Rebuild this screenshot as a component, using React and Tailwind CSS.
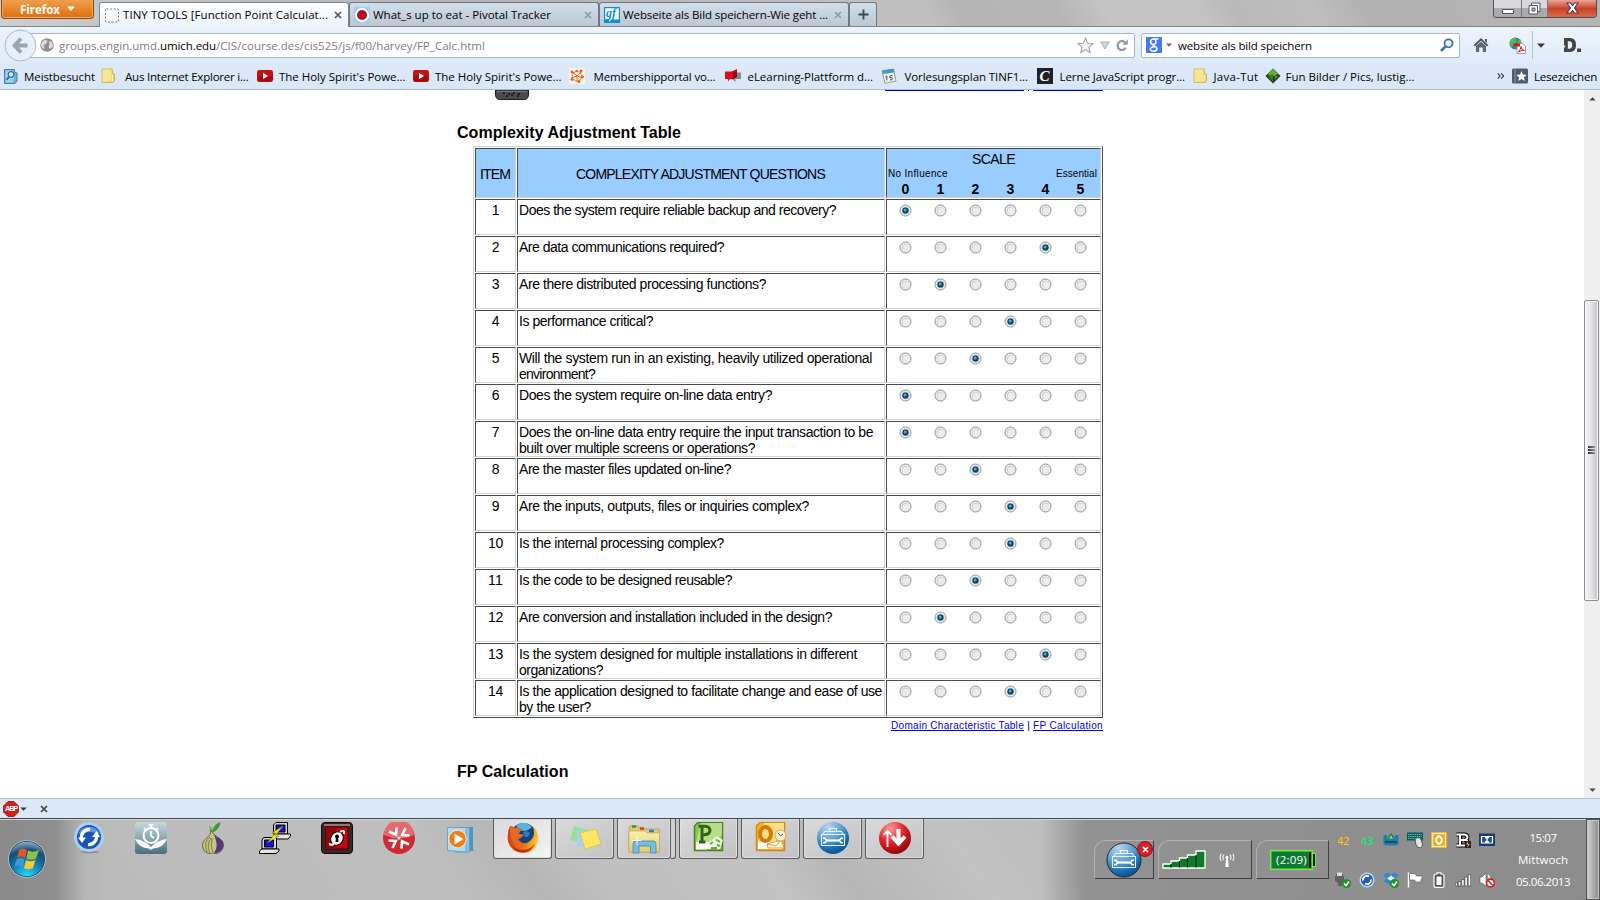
import React, { useLayoutEffect, useRef, useState } from "react";

/* A run of text spread over a given width. */
function Fit({ w, className = "", children }) {
  const ref = useRef(null);
  const [ls, setLs] = useState(0);
  useLayoutEffect(() => {
    const nat = ref.current.getBoundingClientRect().width;
    setLs((w - nat) / String(children).length);
  }, [w, children]);
  return (
    <span className={"block shrink-0 whitespace-pre " + className} style={{ width: w }}>
      <span ref={ref} style={{ letterSpacing: ls + "px" }}>{children}</span>
    </span>
  );
}

const Caret = ({ className = "" }) => (
  <svg className={className} viewBox="0 0 8 5"><path d="M0 0.5H8L4 4.7Z" fill="currentColor" /></svg>
);
const Cross = ({ className = "" }) => (
  <svg className={className} viewBox="0 0 8 8"><path d="M1 1L7 7M7 1L1 7" stroke="currentColor" strokeWidth="1.7" /></svg>
);

/* ---------- bookmark icons ---------- */
const S16 = ({ children, className = "" }) => (
  <svg className={"h-4 w-4 shrink-0 " + className} viewBox="0 0 16 16">{children}</svg>
);
const MostVisited = () => (
  <S16>
    <path d="M1.5 1.5H11.5V4L14 5V13L12 15.5H1.5Z" fill="#6fb1da" stroke="#3f7fae" />
    <path d="M2.5 2.5H10.5V14.5H2.5Z" fill="#9fd0ee" />
    <circle cx="8" cy="6.5" r="2.8" fill="#cfeaf9" stroke="#2e6e9e" strokeWidth="1.2" />
    <path d="M6 8.8L3.5 11.8" stroke="#2e6e9e" strokeWidth="1.8" />
  </S16>
);
const Folder = () => (
  <S16>
    <path d="M2 1H12.500V5.500L14.500 6V13L12.500 14.500H2Z" fill="#e8cc68" stroke="#cdae4c" strokeWidth="0.800" />
    <path d="M2.500 1.500H11.500V13.500L2.500 14.300Z" fill="#f6e595" />
    <path d="M12.500 6.500V13" stroke="#fff3b5" />
  </S16>
);
const YouTube = () => (
  <S16>
    <rect x="0" y="2" width="16" height="12" rx="2.2" fill="#c31212" />
    <rect x="0.5" y="8" width="15" height="5.6" rx="2" fill="#a50c0c" />
    <path d="M6 4.8L11 8L6 11.2Z" fill="#fff" />
  </S16>
);
const Member = () => (
  <S16>
    <rect width="16" height="16" fill="#fdf6ef" rx="1" />
    <circle cx="8" cy="8.2" r="4.800" fill="none" stroke="#ec9a62" strokeWidth="1.2" />
    <path d="M8 8L3 3M8 8L13 3M8 8L2 10M8 8L14 10M8 8L8 14" stroke="#dd5a1e" strokeWidth="0.900" />
    <circle cx="3" cy="4" r="1.500" fill="#e8601e" /><circle cx="12" cy="3" r="1.500" fill="#e8601e" /><circle cx="7.500" cy="3" r="1.200" fill="#e8601e" />
    <circle cx="13.500" cy="9" r="1.400" fill="#e8601e" /><circle cx="3" cy="11.500" r="1.400" fill="#e8601e" /><circle cx="10" cy="13.500" r="1.500" fill="#e8601e" />
  </S16>
);
const ELearn = () => (
  <S16>
    <path d="M0 3.500H8V11H5L3 13.500V11H0Z" fill="#e30a17" />
    <path d="M8 4.500H16V11H10.500V14L8 11.500Z" fill="#7f8a8c" />
    <path d="M7 3.500L12 1V9L7 11.500Z" fill="#c20d18" /><path d="M8 5L12 4V9L8 11Z" fill="#8d0c14" />
  </S16>
);
const Calendar = () => (
  <S16>
    <path d="M1 3L12.500 1L15 13L4 15.3Z" fill="#eef0ee" stroke="#84888a" strokeWidth="0.800" />
    <path d="M1 2.500L12.500 0.800L13.300 4.500L1.700 6Z" fill="#3c9bd0" />
    <path d="M4.500 8.800L5.800 8V12.300M11.500 7.500L8.800 8L9 10Q11.500 9 11.700 10.500Q11.500 12 9 12" stroke="#4a4e50" strokeWidth="1" fill="none" />
  </S16>
);
const CodeC = () => (
  <span className="flex h-4 w-4 shrink-0 items-center justify-center bg-[#1f2329] font-['Liberation_Serif',serif] text-[15px] leading-4 font-bold text-white italic">C</span>
);
const Diamond = () => (
  <S16>
    <path d="M8 0.5L15.5 8L8 15.5L0.5 8Z" fill="#2a3a1c" />
    <path d="M8 1L13 6L7 9L3 6Z" fill="#5db52b" />
    <path d="M3 8L8 6L8 14Z" fill="#3b7d20" /><path d="M10 8L13 8L9.5 12Z" fill="#7c8a70" />
  </S16>
);

const bookmarks = [
  { I: MostVisited, t: "Meistbesucht", w: 71, a: "ml-[3px]", b: "ml-[5px]" },
  { I: Folder, t: "Aus Internet Explorer i...", w: 123.5, a: "ml-[5px]", b: "ml-[9px]" },
  { I: YouTube, t: "The Holy Spirit's Powe...", w: 126.5, a: "ml-[8.5px]", b: "ml-[6px]" },
  { I: YouTube, t: "The Holy Spirit's Powe...", w: 126.5, a: "ml-[7.500px]", b: "ml-[6px]" },
  { I: Member, t: "Membershipportal vo...", w: 122, a: "ml-[7.500px]", b: "ml-[8.500px]" },
  { I: ELearn, t: "eLearning-Plattform d...", w: 125.5, a: "ml-[9px]", b: "ml-[7px]" },
  { I: Calendar, t: "Vorlesungsplan TINF1...", w: 123.5, a: "ml-[7.500px]", b: "ml-[8px]" },
  { I: CodeC, t: "Lerne JavaScript progr...", w: 125.5, a: "ml-[8.500px]", b: "ml-[7px]" },
  { I: Folder, t: "Java-Tut", w: 45, a: "ml-[6.500px]", b: "ml-[6px]" },
  { I: Diamond, t: "Fun Bilder / Pics, lustig...", w: 129, a: "ml-[6px]", b: "ml-[5px]" },
];

/* ---------- browser chrome ---------- */
function TitleBar() {
  return (
    <div className="relative flex h-[27px] items-start border-b border-[#858585] bg-[linear-gradient(60deg,#cfcfcf_0%,#c6c6c6_6%,#b4b4b4_30%,#c0c0c0_57%,#bfbfbf_58%,#b4b4b4_60%,#b6b6b6_66%,#c4c4c4_69%,#c2c2c2_75%,#b9b9b9_77%,#bebebe_82%,#b2b2b2_85%,#b5b5b5_100%)]">
      <div className="ml-px flex h-[19px] w-[93px] items-start rounded-b-[4px] border border-t-0 border-[#8a4a10] bg-linear-to-b from-[#eda04f] via-[#e8872a] to-[#dc6d0c] pl-[18px] shadow-[inset_0_-1px_0_#f3b070,inset_1px_0_0_#f0a660,inset_-1px_0_0_#f0a660]">
        <Fit w={40} className="text-[11.5px] leading-[19px] font-bold text-white">Firefox</Fit>
        <Caret className="mt-[6px] ml-[7px] h-[5px] w-[8px] text-white" />
      </div>
      <div className="mt-[2px] ml-[5px] flex h-[25px] w-[250px] items-center rounded-t-[3px] border border-b-0 border-[#7c8791] bg-linear-to-b from-white to-[#ebf3fc] pl-[5px]">
        <svg className="h-[15px] w-[14px]" viewBox="0 0 14 15"><rect x="0.5" y="1" width="13" height="13" rx="1" fill="none" stroke="#777" strokeDasharray="2 1.6" /></svg>
        <Fit w={205} className="ml-[4px] text-[11.5px]">TINY TOOLS [Function Point Calculat...</Fit>
        <Cross className="ml-[6px] h-[8px] w-[8px] text-[#555]" />
      </div>
      <div className="mt-[2px] flex h-[24px] w-[250px] items-center rounded-t-[3px] border border-b-0 border-[#6f7780] bg-linear-to-b from-[#d3deea] to-[#bac7d4] pl-[4px]">
        <svg className="h-4 w-4" viewBox="0 0 16 16"><rect width="16" height="16" fill="#9fd0f0" /><circle cx="8" cy="8" r="7" fill="#fff" /><circle cx="8" cy="8" r="5" fill="#b5121f" /></svg>
        <Fit w={178} className="ml-[3px] text-[11.5px]">What_s up to eat - Pivotal Tracker</Fit>
        <Cross className="ml-[33px] h-[8px] w-[8px] text-[#909aa4]" />
      </div>
      <div className="mt-[2px] flex h-[24px] w-[250px] items-center rounded-t-[3px] border border-[#6f7780] border-b-0 bg-linear-to-b from-[#d3deea] to-[#bac7d4] pl-[4px]">
        <svg className="h-4 w-4" viewBox="0 0 16 16"><path d="M0 0H16V16H0Z" fill="#0d8fd4" /><path d="M1.2 1.2H14.800V12.500H7L5.500 15L5 12.500H1.2Z" fill="#fff" /><text x="2" y="9.800" fontSize="12" fontStyle="italic" fontWeight="bold" fontFamily="Liberation Serif, serif" fill="#0d8fd4">gf</text></svg>
        <Fit w={205} className="ml-[3px] text-[11.5px]">Webseite als Bild speichern-Wie geht ...</Fit>
        <Cross className="ml-[6px] h-[8px] w-[8px] text-[#909aa4]" />
      </div>
      <div className="mt-[2px] flex h-[24px] w-[28px] items-center justify-center rounded-t-[3px] border border-b-0 border-[#6f7780] bg-linear-to-b from-[#d3deea] to-[#bac7d4]">
        <svg className="h-[11px] w-[11px]" viewBox="0 0 11 11"><path d="M5.5 0.5V10.5M0.5 5.5H10.5" stroke="#3d4650" strokeWidth="1.8" /></svg>
      </div>
      <div className="mr-[3px] ml-auto flex h-[18px] overflow-hidden rounded-b-[4px] border border-t-0 border-[#4e4e55]">
        <div className="flex w-[28px] items-center justify-center border-r border-[#77777c] bg-linear-to-b from-[#d8d8dc] from-50% to-[#a9a9ae] to-50%">
          <div className="mt-[5px] h-[5px] w-[12px] rounded-[1px] border border-[#55555f] bg-white" />
        </div>
        <div className="flex w-[26px] items-center justify-center border-r border-[#77777c] bg-linear-to-b from-[#d8d8dc] from-50% to-[#a9a9ae] to-50%">
          <svg className="mb-px h-[13px] w-[13px]" viewBox="0 0 13 13"><path d="M3.5 1H12V9.5H9.5V12H1V3.5H3.5Z" fill="#fff" stroke="#55555f" /><path d="M3.5 3.5H9.5V9.5" fill="none" stroke="#55555f" /><path d="M4 6H7V9H4Z" fill="#bbb" stroke="#55555f" /></svg>
        </div>
        <div className="flex w-[48px] items-center justify-center bg-linear-to-b from-[#e8a497] from-0% via-[#c5432b] via-50% to-[#d9694a]">
          <svg className="mb-px h-[12px] w-[13px]" viewBox="0 0 13 12"><path d="M1 1H4.500L6.500 3.500L8.500 1H12L8.500 6L12 11H8.500L6.500 8.500L4.500 11H1L4.500 6Z" fill="#fff" stroke="#4c3a50" strokeWidth="1.100" /></svg>
        </div>
      </div>
    </div>
  );
}

function NavBar() {
  return (
    <div className="flex h-[36px] items-center bg-linear-to-b from-[#ecf4fd] to-[#dfebf9]">
      <svg className="z-10 ml-[3.500px] h-[33px] w-[33px] shrink-0" viewBox="0 0 33 33">
        <circle cx="16.500" cy="16.500" r="15.500" fill="#e6effa" stroke="#a9b9cc" />
        <path d="M23.500 16.500H11M17 9.500L10.500 16.500L17 23.500" fill="none" stroke="#98a4b0" strokeWidth="3.800" />
      </svg>
      <div className="-ml-[6.500px] flex h-[25px] w-[1105px] items-center rounded-r-[2px] border border-[#a4b6cd] bg-white pl-[9px]">
        <svg className="h-[14px] w-[14px]" viewBox="0 0 14 14"><circle cx="7" cy="7" r="6.800" fill="#8e8e8e" /><path d="M2 4L5 1.500L7.500 3L6 6L3.500 7L4.500 10L3 11L0.800 7ZM9 3L12 4L13 8L10.500 11L8.500 9L9.500 6Z" fill="#dcdcdc" /></svg>
        <Fit w={101} className="mt-px ml-[5px] text-[11.5px] text-[#7d7d7d]">groups.engin.umd.</Fit>
        <Fit w={56} className="mt-px text-[11.5px]">umich.edu</Fit>
        <Fit w={269} className="mt-px text-[11.5px] text-[#7d7d7d]">/CIS/course.des/cis525/js/f00/harvey/FP_Calc.html</Fit>
        <svg className="ml-auto h-[17px] w-[17px]" viewBox="0 0 17 17"><path d="M8.500 1.200L10.600 6.200L16 6.600L11.900 10.100L13.200 15.500L8.500 12.600L3.800 15.500L5.100 10.100L1 6.600L6.400 6.200Z" fill="#f4f4f4" stroke="#a5a5a5" strokeWidth="1.100" /></svg>
        <svg className="ml-[6px] h-[9px] w-[10px]" viewBox="0 0 10 9"><path d="M0.800 1H9.200L5 8Z" fill="#cfd6de" stroke="#aab3bd" /></svg>
        <svg className="mr-[6px] ml-[6px] h-[13px] w-[12px]" viewBox="0 0 12 13"><path d="M9.800 8.800A4.400 4.400 0 1 1 9 3.400" fill="none" stroke="#8d99a6" strokeWidth="2.200" /><path d="M6.300 5.800H11.800V0.300Z" fill="#8d99a6" /></svg>
      </div>
      <div className="ml-[6px] flex h-[25px] w-[319px] items-center rounded-[2px] border border-[#a4b6cd] bg-white pl-[4px]">
        <svg className="h-4 w-4" viewBox="0 0 16 16"><rect width="16" height="16" rx="0.500" fill="#4479f5" /><circle cx="7.300" cy="4.800" r="2.700" fill="none" stroke="#fff" strokeWidth="1.500" /><path d="M8 2H12.500M9 7.500Q6 8.200 8 9.300Q11 10 11 12Q10.500 14.200 7.500 14.200T4.200 12Q4.500 10 8.500 9.800" fill="none" stroke="#fff" strokeWidth="1.400" /></svg>
        <Caret className="ml-[4px] h-[4px] w-[6px] text-[#666]" />
        <Fit w={134} className="mt-px ml-[6px] text-[11.5px]">website als bild speichern</Fit>
        <svg className="mr-[5px] ml-auto h-[14px] w-[14px]" viewBox="0 0 14 14"><circle cx="8.500" cy="5.300" r="4" fill="#eef6fd" stroke="#3d74ad" strokeWidth="1.800" /><path d="M5.600 8.300L1 13" stroke="#3d74ad" strokeWidth="2.600" /></svg>
      </div>
      <svg className="ml-[13px] h-[16px] w-[16px] shrink-0" viewBox="0 0 16 16"><path d="M0.500 8.300L8 1L15.500 8.300L14 9.500L8 3.800L2 9.500Z" fill="#4e5a64" /><path d="M12 2H14V6L12 4Z" fill="#4e5a64" /><path d="M3 9L8 4.800L13 9V15H9.800V10.500H6.200V15H3Z" fill="#5c6871" /></svg>
      <svg className="ml-[20px] h-[17px] w-[17px] shrink-0" viewBox="0 0 17 17"><circle cx="6.500" cy="6.500" r="6" fill="#3277c7" /><path d="M1 4Q4 0 7 1L8 5L4 7L3 11Q0 8 1 4ZM9 2L12 4V7H9Z" fill="#56b83c" /><path d="M8 6.500H13.500L16.500 9V16.500H8Z" fill="#fff" stroke="#8c8c8c" strokeWidth="0.800" /><path d="M5 6.500H11V9.500H5Z" fill="#e51010" /><path d="M9.500 15Q12 12 12 9.500Q12 12.500 15.300 13.500Q12 13 9.500 15Z" fill="none" stroke="#d21f1f" /></svg>
      <div className="ml-[6px] h-[28px] w-px bg-[#b4c3d4]" />
      <Caret className="ml-[4px] h-[5px] w-[8px] text-[#2e3a42]" />
      <svg className="ml-[19px] h-[14px] w-[17px] shrink-0" viewBox="0 0 17 14"><path d="M0 0H6Q12 0 12 7T6 14H0V10L1.500 8.500L0 7ZM3.800 3.300V10.700H5.500Q8.200 10.700 8.200 7T5.500 3.300Z" fill="#444" fillRule="evenodd" /><path d="M13 10.500H17V14H13Z" fill="#444" /></svg>
    </div>
  );
}

function BookmarkBar() {
  return (
    <div className="flex h-[27px] items-center border-b border-[#a9bbd2] bg-linear-to-b from-[#dde9f8] to-[#d9e7f7] text-[11.5px]">
      {bookmarks.map(({ I, t, w, a, b }, i) => (
        <div key={i} className={"flex items-center " + a}>
          <I />
          <Fit w={w} className={"mt-[2px] " + b}>{t}</Fit>
        </div>
      ))}
      <svg className="ml-auto h-[6px] w-[8px] shrink-0" viewBox="0 0 9 7"><path d="M0.700 0.500L3.500 3.500L0.700 6.500M4.700 0.500L7.500 3.500L4.700 6.500" fill="none" stroke="#222" strokeWidth="1.200" /></svg>
      <S16 className="ml-[7px]"><rect y="0.500" width="16" height="15" rx="1.500" fill="#4e5d69" /><path d="M3 1V15" stroke="#8d9aa5" /><path d="M9.500 3L11 6.600L14.600 6.900L11.900 9.300L12.800 13L9.500 11L6.200 13L7.100 9.300L4.400 6.900L8 6.600Z" fill="#fff" /></S16>
      <Fit w={63} className="mt-[2px] mr-[3px] ml-[6px]">Lesezeichen</Fit>
    </div>
  );
}

/* ---------- page ---------- */
const questions = [
  [0, ["Does the system require reliable backup and recovery?", 317]],
  [4, ["Are data communications required?", 205]],
  [1, ["Are there distributed processing functions?", 247]],
  [3, ["Is performance critical?", 134]],
  [2, ["Will the system run in an existing, heavily utilized operational", 353], ["environment?", 76]],
  [0, ["Does the system require on-line data entry?", 253]],
  [0, ["Does the on-line data entry require the input transaction to be", 354], ["built over multiple screens or operations?", 236]],
  [2, ["Are the master files updated on-line?", 212]],
  [3, ["Are the inputs, outputs, files or inquiries complex?", 290]],
  [3, ["Is the internal processing complex?", 205]],
  [2, ["Is the code to be designed reusable?", 213]],
  [1, ["Are conversion and installation included in the design?", 313]],
  [4, ["Is the system designed for multiple installations in different", 338], ["organizations?", 84]],
  [3, ["Is the application designed to facilitate change and ease of use", 363], ["by the user?", 72]],
];

const cell = "border border-t-[#4a4a4a] border-l-[#4a4a4a] border-r-[#d3d3d3] border-b-[#d3d3d3] ";

const Radio = ({ on }) => (
  <svg className="h-[13px] w-[13px]" viewBox="0 0 13 13">
    <circle cx="6.500" cy="6.500" r="5.500" fill="#f8f8f8" stroke="#8b8c8e" />
    <circle cx="6.500" cy="6.500" r="4" fill={on ? "#b9cdd9" : "#d3d4d7"} />
    <circle cx="7" cy="7" r="3.200" fill={on ? "#b8d0de" : "#ebeced"} />
    {on && <circle cx="6.500" cy="6.500" r="3.100" fill="#12405f" />}
    {on && <circle cx="6.200" cy="6" r="1.500" fill="#3fb0e0" />}
  </svg>
);

function Table() {
  return (
    <div className="ml-[16px] grid w-[630px] grid-cols-[41px_368px_215px] gap-px border border-t-[#d3d3d3] border-r-[#4a4a4a] border-b-[#4a4a4a] border-l-[#d3d3d3] p-px text-[14px] leading-4">
      <div className={cell + "flex h-[50px] items-center bg-[#99ccff] pl-[4px]"}><Fit w={30} className="mt-px">ITEM</Fit></div>
      <div className={cell + "flex items-center bg-[#99ccff] pl-[58px]"}><Fit w={249} className="mt-px">COMPLEXITY ADJUSTMENT QUESTIONS</Fit></div>
      <div className={cell + "flex flex-col bg-[#99ccff] pt-[2px]"}>
        <Fit w={43} className="ml-[85px]">SCALE</Fit>
        <div className="flex h-[14px] items-center justify-between pr-[3px] pl-px text-[10px]">
          <Fit w={60}>No Influence</Fit>
          <Fit w={41}>Essential</Fit>
        </div>
        <div className="ml-px flex font-bold">
          {[0, 1, 2, 3, 4, 5].map((n) => <span key={n} className="w-[35px] text-center">{n}</span>)}
        </div>
      </div>
      {questions.map(([sel, ...lines], i) => (
        <React.Fragment key={i}>
          <div className={cell + "flex h-[36px] justify-center pt-[2px]"}><Fit w={i < 9 ? 7.5 : 15}>{String(i + 1)}</Fit></div>
          <div className={cell + "h-[36px] pt-[2px] pl-px"}>
            {lines.map(([t, w]) => <Fit key={t} w={w}>{t}</Fit>)}
          </div>
          <div className={cell + "flex pt-[4px] pl-px"}>
            {[0, 1, 2, 3, 4, 5].map((n) => <span key={n} className="flex w-[35px] justify-center"><Radio on={n === sel} /></span>)}
          </div>
        </React.Fragment>
      ))}
    </div>
  );
}

function Page() {
  return (
    <div className="flex h-[708px] bg-white font-['Liberation_Sans',Arial,sans-serif]">
      <div className="flex w-[1584px] flex-col pl-[457px]">
        <div className="flex h-[11px] items-start">
          <svg className="ml-[38px] h-[10px] w-[34px]" viewBox="0 0 34 10"><path d="M0.500 0H33.500V5Q33 9.500 29 9.500H5Q1 9.500 0.500 5Z" fill="#4b4b4b" stroke="#1c1c1c" /><path d="M2 1.500H32" stroke="#777" /><path d="M8 3H10M13 4H15M18 3H20M23 4H25M11 6H13M16 5H18M22 6H24" stroke="#111" strokeWidth="1.400" /></svg>
          <div className="ml-[356px] h-px w-[139px] bg-[#0000ee]" />
          <div className="ml-[4px] h-px w-px bg-black" />
          <div className="ml-[4px] h-px w-[70px] bg-[#0000ee]" />
        </div>
        <Fit w={224} className="mt-[23px] h-[22px] text-[16px] leading-[18px] font-bold">Complexity Adjustment Table</Fit>
        <Table />
        <div className="mt-[2px] flex h-[12px] w-[646px] justify-end text-[10px] leading-[12px] text-[#0000ee]">
          <Fit w={133} className="underline">Domain Characteristic Table</Fit>
          <span className="w-[9px] text-center text-black">|</span>
          <Fit w={70} className="underline">FP Calculation</Fit>
        </div>
        <Fit w={111.5} className="mt-[31px] text-[16px] leading-[18px] font-bold">FP Calculation</Fit>
      </div>
      <div className="flex w-4 flex-col items-center bg-[#efefef] text-[#444]">
        <Caret className="mt-[7px] h-[4px] w-[7px] rotate-180" />
        <div className="mt-[199px] mr-px flex h-[301px] w-[15px] flex-col items-center justify-center gap-px rounded-[2px] border border-[#8f8f92] bg-linear-to-r from-[#f6f6f8] via-[#e3e3e7] to-[#c2c2c9] pb-[2px] shadow-[inset_0_0_0_1px_#f8f8fa]">
          <div className="h-[2px] w-[7px] bg-linear-to-r from-[#333] to-[#999]" /><div className="h-[2px] w-[7px] bg-linear-to-r from-[#333] to-[#999]" /><div className="h-[2px] w-[7px] bg-linear-to-r from-[#333] to-[#999]" />
        </div>
        <Caret className="mt-auto mb-[6px] h-[4px] w-[7px]" />
      </div>
    </div>
  );
}

/* ---------- task bar ---------- */
const S32 = ({ children, className = "" }) => (
  <svg className={"h-8 w-8 shrink-0 " + className} viewBox="0 0 32 32">{children}</svg>
);

const Toolbox = () => (
  <>
    <path d="M4.500 12.500H27.500V23.500H4.500ZM6 12.500L7.500 9.500H24.500L26 12.500M12.500 9.500V6.500H19.500V9.500" fill="none" stroke="#e8f5ff" strokeWidth="1.100" />
    <path d="M9 18.500H23" stroke="#fff" strokeWidth="2.200" />
    <path d="M6 16.300H8L9.500 18.500L8 20.700H6M26 16.300H24L22.500 18.500L24 20.700H26" fill="none" stroke="#fff" strokeWidth="1.600" />
  </>
);

function Defs() {
  return (
    <svg className="absolute h-0 w-0">
      <defs>
        <radialGradient id="blue" cx="0.35" cy="0.15" r="0.95"><stop offset="0" stopColor="#b5d6f2" /><stop offset="0.450" stopColor="#5b9fd6" /><stop offset="0.75" stopColor="#1568aa" /><stop offset="1" stopColor="#064a80" /></radialGradient>
        <radialGradient id="red" cx="0.35" cy="0.2" r="0.9"><stop offset="0" stopColor="#ff9a9a" /><stop offset="0.5" stopColor="#dd2227" /><stop offset="1" stopColor="#7d0004" /></radialGradient>
        <radialGradient id="orb" cx="0.5" cy="1" r="1"><stop offset="0" stopColor="#22e4ff" /><stop offset="0.4" stopColor="#1286bd" /><stop offset="0.75" stopColor="#124c75" /><stop offset="1" stopColor="#9fb6c8" /></radialGradient>
        <linearGradient id="teal" x1="0" y1="0" x2="0" y2="1"><stop offset="0" stopColor="#c9dadd" /><stop offset="0.550" stopColor="#86a4ac" /><stop offset="1" stopColor="#466e80" /></linearGradient>
        <linearGradient id="fox" x1="0" y1="0.300" x2="1" y2="0.500"><stop offset="0" stopColor="#d8380f" /><stop offset="0.6" stopColor="#e8741b" /><stop offset="1" stopColor="#fbcf35" /></linearGradient>
        <linearGradient id="folder" x1="0" y1="0" x2="0" y2="1"><stop offset="0" stopColor="#fbf0b4" /><stop offset="1" stopColor="#e5cb6a" /></linearGradient>
      </defs>
    </svg>
  );
}

const Sync = () => (
  <S32>
    <ellipse cx="17" cy="30" rx="9" ry="1.500" fill="#777" opacity="0.6" />
    <circle cx="16" cy="15" r="15" fill="#a9d0f3" /><circle cx="16" cy="15" r="12" fill="#1a54b4" /><path d="M5 12A12 12 0 0 1 27 12Q16 8 5 12" fill="#5c96dd" />
    <path d="M8.500 17A8 8 0 0 1 17 7.500" fill="none" stroke="#fff" strokeWidth="3.200" /><path d="M5 15.500H13L9 21Z" fill="#fff" />
    <path d="M23.500 13A8 8 0 0 1 15 22.500" fill="none" stroke="#fff" strokeWidth="3.200" /><path d="M27 15H19L23.500 9Z" fill="#fff" />
  </S32>
);
const ClockApp = () => (
  <S32>
    <rect width="32" height="32" rx="3" fill="url(#teal)" />
    <circle cx="16" cy="13.500" r="7.500" fill="none" stroke="#fff" strokeWidth="2" /><path d="M13.500 3H18.500M16 3V6M9 6L11 8M23 6L21 8M16 9V14L19 16" fill="none" stroke="#fff" strokeWidth="1.600" />
    <path d="M0 17Q9 18 14.500 23.500L16 25L17.500 23.500Q23 18 32 17Q28 26 18 26.500L16 28L14 26.500Q4 26 0 17Z" fill="#fff" />
  </S32>
);
const Onion = () => (
  <S32>
    <path d="M15 10Q16 3 23 0Q24 5 17 10Z" fill="#3f9a35" /><path d="M13 10L12 3L16 8Z" fill="#6cb84a" />
    <path d="M14 8Q16 13 22 16Q27 19 26.500 24Q25 32 16 32Q7 32 5.500 25Q5 19 10 16Q14 13 14 8Z" fill="#c4c583" stroke="#56542d" strokeWidth="0.800" />
    <path d="M16 11Q17 14 22 16Q27 19 26.500 24Q25 31 16.500 31.500Q23 24 16 11Z" fill="#54387b" />
    <path d="M13 15Q6 20 10 30M14 16Q9 23 13 31M15 16Q13 24 16 31" fill="none" stroke="#777743" strokeWidth="0.900" />
  </S32>
);
const Putty = () => (
  <S32>
    <g stroke="#000" strokeWidth="1"><path d="M17 0.500H28.500V12H14.500V3Z" fill="#d7d7d7" /><path d="M17 3H26V10H17Z" fill="#1210e0" /><path d="M16 12H31.500V14L29 17H14Z" fill="#e6e6e6" />
    <path d="M4.500 15.500H17.500V27H3V18Z" fill="#d7d7d7" /><path d="M5.500 18H14.500V25H5.500Z" fill="#1210e0" /><path d="M3 27H20V29L17 31.500H0.500V29Z" fill="#e6e6e6" /></g>
    <path d="M24 4L13 11H17L8 21L20 14H16Z" fill="#fff000" stroke="#847a00" strokeWidth="0.600" />
  </S32>
);
const RedBox = () => (
  <S32>
    <rect x="0.500" y="0.500" width="31" height="31" rx="3.500" fill="#3a2626" stroke="#140808" /><path d="M3 3H29" stroke="#a39a9a" strokeWidth="1.500" />
    <rect x="5" y="5" width="22" height="22" fill="#c20810" stroke="#400" /><path d="M5 5H15V27H5Z" fill="#960409" />
    <ellipse cx="16" cy="16.500" rx="6" ry="7" fill="#fff" stroke="#000" transform="rotate(35 16 16.500)" /><path d="M9 21Q8 24 13 22M19 10Q24 7 23 12" stroke="#fff" strokeWidth="2" fill="none" />
    <circle cx="16" cy="14.500" r="2" fill="#000" /><path d="M15 15H17L17.500 20H14.500Z" fill="#000" />
  </S32>
);
const RedCircle = () => (
  <S32>
    <circle cx="16" cy="16" r="16" fill="#cf2a33" /><path d="M1 13A15 15 0 0 1 31 13Q16 20 1 13" fill="#e46a6e" />
    <g fill="none" stroke="#fff" strokeWidth="2.600">
      <path d="M6 9.500L13 12.800L13.500 5.500" />
      <path d="M6 9.500L13 12.800L13.500 5.500" transform="rotate(90 16 16)" />
      <path d="M6 9.500L13 12.800L13.500 5.500" transform="rotate(180 16 16)" />
      <path d="M6 9.500L13 12.800L13.500 5.500" transform="rotate(270 16 16)" />
    </g>
    <circle cx="16" cy="16" r="1.500" fill="#fff" />
  </S32>
);
const Player = () => (
  <S32>
    <path d="M14 5H28V28L30 29H14Z" fill="#4b97c0" /><path d="M10 5.500H24.500V30H10Z" fill="#8fc5e2" stroke="#4c97c3" strokeWidth="0.700" /><path d="M2.500 5.500H21V30L2.500 28.500Z" fill="#b2dbf0" stroke="#4c97c3" strokeWidth="0.700" />
    <circle cx="12.500" cy="17" r="8.800" fill="#f07c1c" stroke="#fff0dd" /><path d="M9.500 11.500L18.500 17L9.500 22.500Z" fill="#fff" />
  </S32>
);
const FirefoxIcon = () => (
  <S32>
    <circle cx="16.500" cy="14" r="13" fill="#17417c" /><path d="M9 4Q17 -3 25 5Q21 9 17 9T9 4Z" fill="#57b2dc" /><path d="M16 10Q20 8 23 11Q22 16 18 15Z" fill="#2f7dbd" />
    <path d="M3 4Q6 4 8 6Q12 5 15 8Q12 9 12 12L17 13Q14 16 11 17Q14 22 20 21Q26 18 27 12Q27 6 25 4Q32 9 31 18Q29 31 16 31Q3 30 0.800 18Q0 10 3 4Z" fill="url(#fox)" />
    <path d="M3 4Q6 4 8 6Q12 5 15 8Q12 9 12 12L17 13Q14 16 11 17Q13 22 18 21Q15 26 9 23Q2 18 3 4Z" fill="#e06a2a" />
    <path d="M3 20Q7 28 16 28Q24 28 28 21Q25 30 16 30.500Q6 30 3 20Z" fill="#b8300c" />
  </S32>
);
const Notes = () => (
  <S32>
    <path d="M5 4L19 8L14 21L1 18Z" fill="#98e09a" /><path d="M8 9H21V25H8Z" fill="#a9cff8" /><path d="M11 11L27 7L32 22L16 27Z" fill="#ffe566" stroke="#dcbf45" strokeWidth="0.800" />
  </S32>
);
const Explorer = () => (
  <S32>
    <path d="M2 4H10L12 7H31V30H1V6Z" fill="#e4ca71" stroke="#ae934a" strokeWidth="0.700" /><path d="M4 4.500H8" stroke="#18a93a" strokeWidth="2.500" /><path d="M12 6.500H16" stroke="#d93c26" strokeWidth="2.500" /><path d="M21 9H26" stroke="#1c86d8" strokeWidth="2.500" />
    <path d="M1 9H17L19 11H31.500V30H1Z" fill="url(#folder)" stroke="#c0a653" strokeWidth="0.700" />
    <path d="M5 31V22Q5 19 8 19H25Q28 19 28 22V31H22.500V24H11V31Z" fill="#78bce0" stroke="#3d86b5" strokeWidth="0.800" /><path d="M9 14V23M4.500 18.500H13.500" stroke="#fff" strokeWidth="0.900" />
  </S32>
);
const Project = () => (
  <S32>
    <path d="M5 0.500H29.500V28.500H1.500V4Z" fill="#8dc452" stroke="#46811e" strokeWidth="1.500" /><path d="M8 1H29V14Q18 18 14 28H3V20Z" fill="#b8dd86" /><path d="M3 20H27V27H3Z" fill="#fff" />
    <path d="M9 4V20M5.500 4.200H12Q17 4.500 17 8.500Q16.500 13 10 12.800M6 20H12.500" fill="none" stroke="#30661a" strokeWidth="3" />
    <path d="M16 20L24 14L30 18L27 27H16Z" fill="#edf8e3" /><path d="M17 22L20 20M23 17.500L27 20M18 26H24M24 23L27 24" stroke="#69a53c" strokeWidth="2" fill="none" />
  </S32>
);
const Outlook = () => (
  <S32>
    <path d="M5 0.500H29.500V28.500H1.500V4Z" fill="#f6b42c" stroke="#d68910" strokeWidth="1.500" /><path d="M9 1H29V10Q20 20 12 27H3V19Z" fill="#ffe08a" /><path d="M3 20H27V27H3Z" fill="#fff" />
    <ellipse cx="10.500" cy="12" rx="5.500" ry="7" fill="none" stroke="#d77c0a" strokeWidth="4" />
    <path d="M12 22L26 18L29 26H13ZM12 22L21 24L26 18" fill="#fff7e6" stroke="#dba044" />
    <circle cx="25.500" cy="13.500" r="5.500" fill="#fff6e0" stroke="#dba044" /><path d="M23 11L25.500 14L28 12" stroke="#aa4020" fill="none" />
  </S32>
);
const Tools = () => <S32><circle cx="16" cy="16" r="16" fill="url(#blue)" /><Toolbox /></S32>;
const Arrows = () => (
  <S32>
    <circle cx="16" cy="16" r="16" fill="url(#red)" /><path d="M8.500 25V10M4.500 13L8.500 9L12.500 13" fill="none" stroke="#fff" strokeWidth="1.800" /><path d="M19.500 7V21M13 14.500L19.500 21.500L26 14.500" fill="none" stroke="#fff" strokeWidth="4" />
  </S32>
);

const launchers = [Sync, ClockApp, Onion, Putty, RedBox, RedCircle, Player];
const windows = [FirefoxIcon, Notes, Explorer, Project, Outlook, Tools, Arrows];

const T = ({ children }) => <svg className="h-4 w-4" viewBox="0 0 16 16">{children}</svg>;
const Check = () => <><circle cx="11.500" cy="11.500" r="4.500" fill="#239321" /><path d="M9 11.500L11 13.500L14 9.500" fill="none" stroke="#fff" strokeWidth="1.500" /></>;

function TrayIcons() {
  return (
    <div className="grid h-[56px] w-[168px] grid-cols-7 content-between justify-items-center">
      <Fit w={12} className="pt-px font-['DejaVu_Sans',sans-serif] text-[10.5px] leading-4 text-[#ffc800]">42</Fit>
      <Fit w={12} className="pt-px font-['DejaVu_Sans',sans-serif] text-[10.5px] leading-4 text-[#00f07c]">43</Fit>
      <T><path d="M0.500 3H4V7H12V3H15.500V12L13 13.500H3L0.500 12Z" fill="#1c7db5" /><path d="M2 9H14V11H2Z" fill="#1d4a66" /><path d="M8 1L12.500 6.500H3.500Z" fill="#2c7d3c" /><path d="M8 3L10 6.500H6Z" fill="#6ee07a" /></T>
      <T><path d="M0 0.500H16V8.500H0Z" fill="#0b5a5c" /><path d="M1 2.500H15M1 4.500H15M1 6.500H10" stroke="#4ec1bd" strokeWidth="1.200" strokeDasharray="1.500 0.700" /><path d="M8 7Q13 3 15 10T11 15.500Q8 13 8 7Z" fill="#e4e4e4" stroke="#555" /></T>
      <T><rect width="16" height="16" fill="#f1a81c" /><rect x="1.500" y="1.500" width="13" height="13" fill="none" stroke="#fff3c9" strokeWidth="1.300" /><ellipse cx="8" cy="8" rx="2.800" ry="3.800" fill="none" stroke="#fff" strokeWidth="2" /></T>
      <T><g fill="none"><path d="M1.500 2.500H9.500Q12.500 3 12.500 5.200T9 8Q13 8.500 13 11T9 13.500H1.500M5.500 2.500V13.500" stroke="#000" strokeWidth="4" /><path d="M1.500 2.500H9.500Q12.500 3 12.500 5.200T9 8H5M9 8Q13 8.500 13 11T9 13.500H1.500M5 2.500V13.500" stroke="#fff" strokeWidth="1.900" /></g><rect x="10" y="9" width="6" height="7" fill="#222" /><path d="M13.500 9L11 12.500H13L12 16L15 12H13Z" fill="#ffb21c" /></T>
      <T><path d="M0 1.500H16V14H0Z" fill="#173e75" /><path d="M2.500 4.500H13.500V11H2.500Z" fill="#234f8c" stroke="#fff" strokeWidth="1.200" /><path d="M6 5.500H10M6 10H10M8 5.500V10" stroke="#fff" strokeWidth="1.400" /></T>

      <T><path d="M1 2H8V4H9V9L7 11V14H3V11L0 9V4H1Z" fill="#606060" /><path d="M2 0.500H7V4H2Z" fill="#ddd" /><Check /></T>
      <T><circle cx="8" cy="8" r="7.500" fill="#b8d8f5" /><circle cx="8" cy="8" r="6" fill="#225db7" /><path d="M4 8.500A4 4 0 0 1 10 4.500M12 7.500A4 4 0 0 1 6 11.500" stroke="#fff" strokeWidth="1.800" fill="none" /></T>
      <T><path d="M4.500 0.500L8 3L11.500 0.500L16 3.500L12.500 6.500L15 9L8 14L1 9L3.500 6.500L0 3.500Z" fill="#2e87cf" /><path d="M8 3.500L12 6.500L8 9L4 6.500Z" fill="#e2f2ff" /><Check /></T>
      <T><path d="M1.500 0.500V15.500" stroke="#fff" strokeWidth="1.500" /><path d="M2.500 1.500H7.500L9.500 4H15.500L13.500 10H9L7.500 8H2.500Z" fill="#fff" stroke="#555" strokeWidth="0.600" /></T>
      <T><path d="M6 2V0.800H10V2Q13 2 13 4V14Q13 15.300 11.500 15.300H4.500Q3 15.300 3 14V4Q3 2 6 2Z" fill="#555" stroke="#fff" strokeWidth="1.200" /><path d="M5.500 4.500H10.500V13H5.500Z" fill="#fff" /></T>
      <T><path d="M0.300 11H2.500V14H0.300ZM3.300 9.500H5.800V14H3.300ZM6.600 7.500H9.100V14H6.600ZM9.900 5H12.400V14H9.900ZM13.200 2.500H15.700V14H13.200Z" fill="#fff" stroke="#444" strokeWidth="0.700" /></T>
      <T><path d="M1 5H3L7 1V14L3 11H1Z" fill="#fff" stroke="#555" strokeWidth="0.600" /><path d="M9 3Q11.500 6 10 9" stroke="#fff" fill="none" strokeWidth="1.300" /><circle cx="11.500" cy="11" r="3.900" fill="#fff" stroke="#dc1c1c" strokeWidth="1.600" /><path d="M9 8.500L14 13.500" stroke="#dc1c1c" strokeWidth="1.500" /></T>
    </div>
  );
}

const panel = "flex h-[39px] shrink-0 items-center rounded-tl-[12px] border border-t-[#b2b2b2] border-l-[#b2b2b2] border-r-[#3f3f3f] border-b-[#3f3f3f] ";

function TaskBar() {
  return (
    <div className="flex h-[82px] items-start border-t border-[#474747] bg-[linear-gradient(90deg,#8b8b8b_0px,#8e8e8e_55px,#b6b6b6_85px,transparent_110px,transparent_1040px,#929292_1085px,#8c8c8c_1600px),linear-gradient(55deg,#bababa_0%,#bebebe_28%,#b6b6b6_33%,#bfbfbf_37%,#c2c2c2_48%,#b6b6b6_52%,#c2c2c2_60%,#bbb_70%)] shadow-[inset_0_1px_0_#d6d6d6]">
      <svg className="mt-[21px] ml-[8px] h-[38px] w-[38px] shrink-0" viewBox="0 0 38 38">
        <circle cx="19" cy="19" r="17.800" fill="url(#orb)" stroke="#1d4057" /><circle cx="19" cy="19" r="18.500" fill="none" stroke="#b8d8e8" strokeWidth="0.700" />
        <path d="M11 10Q15 7 19 10L17 18Q13 15 9 18Z" fill="#e2542a" /><path d="M20 10.500Q25 13 31 10L28 18.500Q23 21 18.500 18.500Z" fill="#8dc344" />
        <path d="M8.500 19.500Q13 16.500 16.500 19.500L14.500 27Q10 24 6.500 27Z" fill="#3d97dc" /><path d="M18 20Q23 22.500 27.500 20L25 28Q20 30.500 16 28Z" fill="#fcc82c" />
      </svg>
      <div className="mt-[3px] ml-[27px] flex gap-[30px]">
        {launchers.map((I, i) => <I key={i} />)}
      </div>
      <div className="ml-[16px] flex gap-[3px]">
        {windows.map((I, i) => (
          <div key={i} className="flex h-[40px] w-[59px]">
            <div className={"flex h-[40px] flex-1 items-start justify-center rounded-b-[3px] border border-t-0 border-[#5b5b5b] pt-[3px] shadow-[inset_0_0_0_1px_#dedede] " + (i === 0 ? "bg-linear-to-br from-[#d9d9db] to-[#f4f4f5]" : "bg-linear-to-br from-[#dadadc] to-[#c2c2c4]")}>
              <I />
            </div>
            {i === 2 && <div className="h-[40px] w-[5px] rounded-br-[3px] border border-t-0 border-l-0 border-[#5b5b5b] bg-[#d0d0d2]" />}
          </div>
        ))}
      </div>
      <div className="mt-[21px] ml-auto flex gap-[4px]">
        <div className={panel + "relative w-[60px] justify-center"}>
          <svg className="h-[36px] w-[36px]" viewBox="-2 -2 36 36"><circle cx="16" cy="16" r="17" fill="url(#blue)" stroke="#2a2a2a" /><Toolbox /></svg>
          <div className="absolute top-0 right-0 flex h-4 w-4 items-center justify-center rounded-full border border-[#941212] bg-[#d42027] text-white"><Cross className="h-[7px] w-[7px]" /></div>
        </div>
        <div className={panel + "w-[94px] pl-[3px]"}>
          <svg className="h-[20px] w-[44px]" viewBox="0 0 44 20"><path d="M1 18V14H9V11H17.500V8H25.500V5H34V1H43V18Z" fill="#0d7b2c" stroke="#fff" strokeWidth="1.300" /><path d="M9 14V17.500M17.500 11V17.500M25.500 8V17.500M34 5V17.500" stroke="#062c10" strokeWidth="1.300" /></svg>
          <svg className="ml-[13px] h-[18px] w-[16px]" viewBox="0 0 18 18"><path d="M8 7H10L11 17H7Z" fill="#fff" /><circle cx="9" cy="6" r="1.800" fill="#fff" /><path d="M5.500 3Q3.500 6 5.500 9M2.500 2Q0 6 2.500 10M12.500 3Q14.500 6 12.500 9M15.500 2Q18 6 15.500 10" stroke="#f2f2f2" strokeWidth="1.300" fill="none" /></svg>
        </div>
        <div className={panel + "w-[73px] pl-[13px]"}>
          <div className="flex h-[20px] w-[43px] items-center border border-[#74ee3e] bg-linear-to-r from-[#0d7b36] from-93% to-[#111] to-93% pl-[5px] shadow-[inset_0_0_0_1px_#3fae3a]">
            <Fit w={31} className="text-[11.5px] leading-4 text-white">(2:09)</Fit>
          </div>
          <div className="h-[14px] w-[3px] border border-l-0 border-[#74ee3e] bg-[#111]" />
        </div>
      </div>
      <div className="mt-[13px] ml-[2px]"><TrayIcons /></div>
      <div className="mt-[8px] ml-[16px] flex w-[56px] flex-col items-center text-[11.5px] leading-[22px] text-white">
        <Fit w={27}>15:07</Fit>
        <Fit w={50}>Mittwoch</Fit>
        <Fit w={54}>05.06.2013</Fit>
      </div>
      <div className="ml-[15px] h-[81px] w-[14px] border border-[#555] bg-linear-to-r from-[#d2d2d2] to-[#8d8d8d] shadow-[inset_0_0_0_1px_#c4c4c4]" />
    </div>
  );
}

export default function App() {
  return (
    <div className="flex h-[900px] w-[1600px] flex-col overflow-hidden font-['Open_Sans','Noto_Sans',sans-serif] text-black">
      <Defs />
      <TitleBar />
      <NavBar />
      <BookmarkBar />
      <Page />
      <div className="flex h-[20px] items-center border-t border-[#b0c2d4] bg-[#dae8f7]">
        <div className="relative ml-[3px] flex h-4 w-4 items-center justify-center">
          <svg className="absolute inset-0 h-4 w-4" viewBox="0 0 16 16"><path d="M5 0.500H11L15.500 5V11L11 15.500H5L0.500 11V5Z" fill="#d3201d" stroke="#8e1210" strokeWidth="0.800" /></svg>
          <Fit w={12} className="relative font-['Liberation_Sans',sans-serif] text-[7.5px] leading-[10px] font-bold text-white">ABP</Fit>
        </div>
        <Caret className="ml-px h-[4px] w-[7px] text-[#333]" />
        <Cross className="ml-[13px] h-[8px] w-[8px] text-[#444]" />
      </div>
      <TaskBar />
    </div>
  );
}
